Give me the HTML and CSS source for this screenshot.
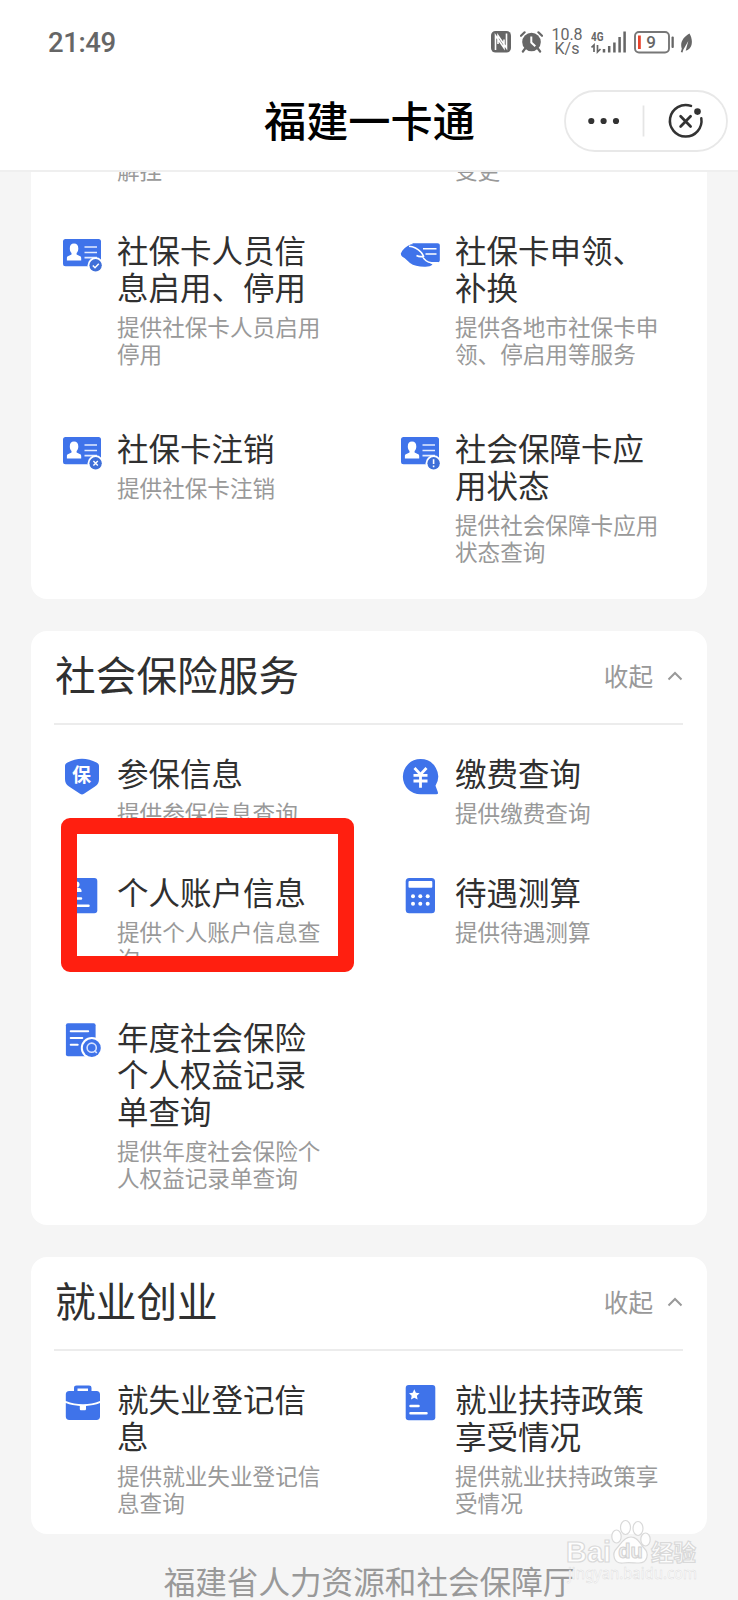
FILE: index.html
```html
<!DOCTYPE html>
<html lang="zh-CN">
<head>
<meta charset="utf-8">
<title>福建一卡通</title>
<link rel="stylesheet" href="styles.css">
</head>
<body>
<svg class="defs" width="0" height="0">
  <symbol id="id-card" viewBox="0 0 40 44">
    <rect x="1" y="7" width="38" height="27.3" rx="2.5" fill="#3f73ea"/>
    <path d="M12 11.600c2.800 0 4.300 2 4.300 4.800 0 2.200-.8 3.700-1.700 4.700v1.500l3.600 1.700c.8.400 1 1 1 1.900v2.400H4.900v-2.400c0-.9.200-1.500 1-1.900l3.600-1.700v-1.500c-.9-1-1.700-2.500-1.700-4.700 0-2.800 1.400-4.800 4.200-4.800z" fill="#fff"/>
    <path d="M22.500 15H35M22.500 20.500H35M22.500 25.700H35" stroke="#e4ecff" stroke-width="1.700"/>
    <circle cx="33.600" cy="33.300" r="8" fill="#fff"/>
    <circle cx="33.600" cy="33.300" r="6.200" fill="#3f6fd8"/>
  </symbol>
  <symbol id="chevron" viewBox="0 0 16 12">
    <path d="M1.500 9.500 8 3l6.500 6.500" fill="none" stroke="#999" stroke-width="2"/>
  </symbol>
</svg>

<header class="top">
  <div class="status">
    <span class="time">21:49</span>
    <div class="indicators">
      <svg class="nfc" width="20" height="22" viewBox="0 0 20 22">
        <rect width="20" height="21.500" rx="4.500" fill="#666"/>
        <path d="M4.500 19V4.500l8.500 12.500V8.500M15.500 2.500V17L7 4.500V13" fill="none" stroke="#fff" stroke-width="1.600"/>
      </svg>
      <svg class="alarm" width="23" height="22" viewBox="0 0 23 22">
        <circle cx="11.500" cy="11" r="9.300" fill="#666"/>
        <path d="M1 4.800 4.600 1.300M22 4.800l-3.600-3.500M5.500 17l-2.600 3.500M17.500 17l2.600 3.500" stroke="#666" stroke-width="2.200" stroke-linecap="round"/>
        <path d="M11.300 5.500v6l4 3.700" fill="none" stroke="#fff" stroke-width="2"/>
      </svg>
      <span class="speed"><span>10.8</span><span>K/s</span></span>
      <svg class="signal" width="36" height="24" viewBox="0 0 36 24">
        <text x="0" y="10" class="net" textLength="12.500" lengthAdjust="spacingAndGlyphs">4G</text>
        <path d="M.5 16.500 3 14v7M6.500 14v7L9.500 18" fill="none" stroke="#666" stroke-width="1.700"/>
        <path d="M13 18v3.500M18.200 15v6.500M23.400 11.500v10M28.600 6v15.500M33.600 .500v21" stroke="#666" stroke-width="2.500"/>
      </svg>
      <svg class="battery" width="41" height="23" viewBox="0 0 41 23">
        <rect x="1" y="1" width="34" height="20.500" rx="4" fill="none" stroke="#777" stroke-width="1.900"/>
        <rect x="4" y="4.500" width="2.800" height="13.500" fill="#e8432c"/>
        <rect x="37.500" y="5.500" width="2.300" height="11.500" rx="1" fill="#666"/>
        <text x="17" y="17.300" class="level" text-anchor="middle">9</text>
      </svg>
      <svg class="leaf" width="13" height="20" viewBox="0 0 13 20">
        <path d="M9.500.500C11.500 4 12.500 8 11.500 12c-.8 3-3 5-5.800 5.800L8.300 8 3.300 16.800 2.500 19.500.8 19l1-3.200C-.5 9 4 3.500 9.500.500z" fill="#666"/>
      </svg>
    </div>
  </div>
  <div class="nav">
    <h1>福建一卡通</h1>
    <div class="capsule">
      <svg width="164" height="62" viewBox="0 0 164 62">
        <rect x="1" y="1" width="162" height="60" rx="30" fill="#fff" stroke="#e8e8e8" stroke-width="1.800"/>
        <g fill="#333"><circle cx="27.300" cy="31" r="3.100"/><circle cx="39.600" cy="31" r="3.100"/><circle cx="52" cy="31" r="3.100"/></g>
        <path d="M79.500 15.500v31" stroke="#e5e5e5" stroke-width="1.800"/>
        <path d="M127 15.900A15.800 15.800 0 1 0 137.300 28.300" fill="none" stroke="#333" stroke-width="2.500" stroke-linecap="round"/>
        <circle cx="133.500" cy="21.600" r="3.300" fill="#333"/>
        <path d="m116.600 26.200 10 10.300m0-10.300-10 10.300" stroke="#333" stroke-width="2.700" stroke-linecap="round"/>
      </svg>
    </div>
  </div>
</header>

<main>
  <section class="card first">
    <div class="grid">
      <div class="item tail"><div class="icon"></div><p>解挂</p></div>
      <div class="item tail"><div class="icon"></div><p>变更</p></div>
      <div class="item tall">
        <svg class="icon" viewBox="0 0 40 44"><use href="#id-card"/><path d="m30.800 33.500 2.200 2.200 3.800-4" fill="none" stroke="#fff" stroke-width="1.500"/></svg>
        <div class="text"><h3>社保卡人员信<br>息启用、停用</h3><p>提供社保卡人员启用<br>停用</p></div>
      </div>
      <div class="item tall">
        <svg class="icon" viewBox="0 0 40 44">
          <path d="M12.500 11.300H37.500c1.500 0 2.300.8 2.300 2.300V28c0 1.500-.8 2.300-2.300 2.300H12z" fill="#3f73ea"/>
          <path d="M.8 21.500C2.500 17 6.500 14 10.500 12.500c3-1 6.500 1.500 9 4l5 7.500c1.500 4 4.500 7 8 8.500-1.500 1.700-4 2.200-7 2.200-6 .2-12-1-15.500-3.700L4.500 26C2.500 25 1 24 .8 21.500z" fill="#3f73ea"/>
          <path d="M9 14.200c5 .3 9 2.800 12.300 6.300 1.500 2 2 3 2.200 3.800-2.500.7-5 .3-7-.8M22.500 24.500c1.500 3 4.500 5.600 9 6.300h7" fill="none" stroke="#fff" stroke-width="1.600"/>
          <path d="M23 16.800h13.500M25.500 22h11" stroke="#fff" stroke-width="1.600"/>
        </svg>
        <div class="text"><h3>社保卡申领、<br>补换</h3><p>提供各地市社保卡申<br>领、停启用等服务</p></div>
      </div>
      <div class="item">
        <svg class="icon" viewBox="0 0 40 44"><use href="#id-card"/><path d="m31.400 31.100 4.400 4.400m0-4.400-4.400 4.400" stroke="#fff" stroke-width="1.400"/></svg>
        <div class="text"><h3>社保卡注销</h3><p>提供社保卡注销</p></div>
      </div>
      <div class="item">
        <svg class="icon" viewBox="0 0 40 44"><use href="#id-card"/><path d="M33.600 29.300v4.800m0 1.400v1.700" stroke="#fff" stroke-width="1.600"/></svg>
        <div class="text"><h3>社会保障卡应<br>用状态</h3><p>提供社会保障卡应用<br>状态查询</p></div>
      </div>
    </div>
  </section>

  <section class="card">
    <div class="head"><h2>社会保险服务</h2><span class="fold">收起<svg width="16" height="12"><use href="#chevron"/></svg></span></div>
    <div class="grid">
      <div class="item">
        <svg class="icon" viewBox="0 0 40 44">
          <path d="M20 3.700c5 0 10 1.500 14.500 3.800 1.800 1 2.500 1.800 2.500 3.500v13c0 3.500-1 5.500-4 7.500l-11 7.300c-1.500 1-2.500 1-4 0L7 31.500C4 29.500 3 27.500 3 24V11c0-1.700.7-2.500 2.500-3.500C10 5.200 15 3.700 20 3.700z" fill="#3f73ea"/>
          <text x="19.500" y="26.500" class="shield" text-anchor="middle">保</text>
        </svg>
        <div class="text"><h3>参保信息</h3><p>提供参保信息查询</p></div>
      </div>
      <div class="item">
        <svg class="icon" viewBox="0 0 40 44">
          <path d="M20.500 4A17.500 17.500 0 0 1 35.500 30.700L37.800 37c.4 1.500.2 2.300-1.300 2.300h-16A17.600 17.600 0 0 1 20.500 4z" fill="#3f73ea"/>
          <path d="m14.500 13 6 6.500 6-6.500M20.500 19.500v13.200M13.500 20.300h14M13.500 26h14" fill="none" stroke="#fff" stroke-width="2.800"/>
        </svg>
        <div class="text"><h3>缴费查询</h3><p>提供缴费查询</p></div>
      </div>
      <div class="item">
        <svg class="icon" viewBox="0 0 40 44">
          <rect x="5.700" y="4" width="29.600" height="35.200" rx="3" fill="#3f73ea"/>
          <circle cx="14.500" cy="10.500" r="3" fill="#fff"/><path d="M9.500 18v-1.500c0-4 10-4 10 0V18z" fill="#fff"/>
          <path d="M10 24.500h9M10 31.700h16.500" stroke="#fff" stroke-width="2.500" stroke-linecap="round"/>
        </svg>
        <div class="text"><h3>个人账户信息</h3><p>提供个人账户信息查<br>询</p></div>
      </div>
      <div class="item">
        <svg class="icon" viewBox="0 0 40 44">
          <rect x="5.700" y="4" width="29.300" height="35.300" rx="3.500" fill="#3f73ea"/>
          <rect x="8.500" y="7" width="23.800" height="6.800" rx="1" fill="#fff"/>
          <g fill="#fff"><circle cx="13" cy="22.300" r="2"/><circle cx="20.300" cy="22.300" r="2"/><circle cx="27.700" cy="22.300" r="2"/><circle cx="13" cy="29.800" r="2"/><circle cx="20.300" cy="29.800" r="2"/><circle cx="27.700" cy="29.800" r="2"/></g>
        </svg>
        <div class="text"><h3>待遇测算</h3><p>提供待遇测算</p></div>
      </div>
      <div class="item">
        <svg class="icon" viewBox="0 0 40 44">
          <rect x="3.900" y="4.300" width="29.700" height="33" rx="2" fill="#3f73ea"/>
          <path d="M8.700 12.300h17.500M8.700 18.900h11.600M8.700 25.700h7" stroke="#fff" stroke-width="2" stroke-linecap="round"/>
          <circle cx="29.800" cy="29" r="11" fill="#fff"/><circle cx="29.800" cy="29" r="9" fill="#3f73ea"/>
          <circle cx="29.700" cy="28.700" r="4.600" fill="none" stroke="#d5e1ff" stroke-width="1.600"/>
          <path d="m32.500 31.700 2.300 2.300" stroke="#d5e1ff" stroke-width="1.700"/>
        </svg>
        <div class="text"><h3>年度社会保险<br>个人权益记录<br>单查询</h3><p>提供年度社会保险个<br>人权益记录单查询</p></div>
      </div>
    </div>
    <div class="highlight"></div>
  </section>

  <section class="card last">
    <div class="head"><h2>就业创业</h2><span class="fold">收起<svg width="16" height="12"><use href="#chevron"/></svg></span></div>
    <div class="grid">
      <div class="item">
        <svg class="icon" viewBox="0 0 40 44">
          <path d="M12 10V7c0-1.700.8-2.500 2.500-2.500h12.500c1.700 0 2.500.8 2.500 2.500v3h5c2.300 0 3.500 1.200 3.500 3.500V20c-5.500 2.200-11 3.300-17 3.300S9.500 22.200 3.800 20v-6.500C3.800 11.200 5 10 7.300 10zM15.500 10h10.500V7.500H15.500z" fill="#3f73ea" fill-rule="evenodd"/>
          <path d="M3.800 22c4.500 1.700 9 2.600 14 2.900v2.800c0 1 .5 1.500 1.500 1.500h3.200c1 0 1.500-.5 1.500-1.500v-2.800c5-.3 9.500-1.200 14-2.900v13.500c0 2.300-1.200 3.500-3.500 3.500H7.300c-2.300 0-3.500-1.200-3.500-3.500z" fill="#3f73ea"/>
        </svg>
        <div class="text"><h3>就失业登记信<br>息</h3><p>提供就业失业登记信<br>息查询</p></div>
      </div>
      <div class="item">
        <svg class="icon" viewBox="0 0 40 44">
          <rect x="5.700" y="4" width="29.600" height="35.300" rx="3" fill="#3f73ea"/>
          <path d="m14.300 8.300 1.600 3.400 3.700.5-2.700 2.600.7 3.700-3.300-1.800L11 18.500l.7-3.700L9 12.200l3.700-.5z" fill="#fff"/>
          <path d="M10.500 25h8M10.500 32.300h16" stroke="#fff" stroke-width="2.500" stroke-linecap="round"/>
        </svg>
        <div class="text"><h3>就业扶持政策<br>享受情况</h3><p>提供就业扶持政策享<br>受情况</p></div>
      </div>
    </div>
  </section>
  <footer>福建省人力资源和社会保障厅</footer>
</main>

<svg class="watermark" width="140" height="70" viewBox="0 0 140 70">
  <g class="mark">
    <text x="3" y="43" class="brand" textLength="45" lengthAdjust="spacingAndGlyphs">Bai</text>
    <ellipse cx="53.500" cy="17.500" rx="4.700" ry="6.500"/><ellipse cx="62.500" cy="8.500" rx="5" ry="7"/><ellipse cx="75" cy="9.500" rx="5" ry="7"/><ellipse cx="82.500" cy="20.500" rx="4.700" ry="6.500"/>
    <path d="M68 18c7 0 9 7 13 11 6 6 3 15-5 15-5 0-11-1-16 0-9 1-12-9-6-15 4-4 7-11 14-11z"/>
    <text x="88" y="41.500" class="cn" textLength="45" lengthAdjust="spacingAndGlyphs">经验</text>
  </g>
  <text x="67.500" y="39" text-anchor="middle" class="du">du</text>
  <text x="5" y="59.500" class="url" textLength="129" lengthAdjust="spacingAndGlyphs">jingyan.baidu.com</text>
</svg>
</body>
</html>
```
FILE: styles.css
```css
* { box-sizing: border-box; }
body {
  position: relative;
  margin: 0;
  width: 738px;
  height: 1600px;
  overflow: hidden;
  background: #f5f5f5;
  color: #303030;
  font-family: "Noto Sans CJK SC", sans-serif;
}
h1, h2, h3, p { margin: 0; font-weight: 400; }
.defs { display: none; }

/* status bar and title bar */
.top { height: 172px; background: #fff; border-bottom: 2px solid #efefef; }
.status {
  display: flex;
  justify-content: space-between;
  height: 84px;
  padding: 0 45px 0 48px;
}
.time {
  padding-top: 26px;
  font: 500 27.500px/33px Roboto, sans-serif;
  letter-spacing: -.4px;
  color: #666;
}
.indicators { display: flex; align-items: flex-start; padding-top: 31px; }
.alarm { margin-left: 9px; }
.speed {
  display: flex;
  flex-direction: column;
  width: 32px;
  margin: -3px 0 0 8px;
  font: 400 16px/14px Roboto, sans-serif;
  text-align: center;
  color: #666;
}
.signal { margin-left: 8px; }
.battery { margin-left: 7px; }
.leaf { margin: 2px 0 0 5px; }
.net { font: 700 13px Roboto, sans-serif; fill: #666; }
.level { font: 500 17px Roboto, sans-serif; fill: #666; }
.nav {
  display: grid;
  grid-template-columns: 1fr 210px 1fr;
  align-items: center;
  height: 74px;
}
.nav h1 {
  grid-column: 2;
  margin-top: -5px;
  font-size: 42.200px;
  line-height: 60px;
  font-weight: 500;
  white-space: nowrap;
  color: #000;
}
.capsule { justify-self: end; margin-right: 10px; height: 62px; }

/* service cards */
main { height: 1428px; overflow: hidden; }
.card {
  position: relative;
  width: 676px;
  height: 594px;
  margin: 0 0 32px 31px;
  overflow: hidden;
  background: #fff;
  border-radius: 16px;
}
.card.first { height: 427px; border-radius: 0 0 16px 16px; }
.card.last { height: 277px; }
.head {
  display: flex;
  align-items: center;
  justify-content: space-between;
  height: 94px;
  margin: 0 24px 0 23px;
  padding-bottom: 7px;
  border-bottom: 2px solid #ececec;
}
.head h2 { padding-left: 1px; font-size: 40.700px; line-height: 54px; }
.fold { display: flex; align-items: center; gap: 14px; padding-top: 2px; font-size: 24.600px; line-height: 32px; color: #999; }
.fold svg { margin-top: 3px; }
.grid {
  display: grid;
  grid-template-columns: 338px 306px;
  row-gap: 46.500px;
  padding: 30px 0 0 31px;
}
.first .grid { padding-top: 0; margin-top: -16px; }
.item { display: flex; gap: 15px; }
.tall { min-height: 152px; }
.icon { flex: none; width: 40px; height: 44px; }
.tail { height: 29px; }
.tail .icon { height: 0; }
.text { margin: -1px 0 1px; }
.item h3 { margin-bottom: 8px; font-size: 31.500px; line-height: 37px; white-space: nowrap; }
.item p { font-size: 22.600px; line-height: 27px; white-space: nowrap; color: #999; }
.shield { font: 700 19px "Noto Sans CJK SC", sans-serif; fill: #fff; }

/* marker drawn over the account entry */
.highlight {
  position: absolute;
  left: 30px;
  top: 187px;
  width: 293px;
  height: 154px;
  border: 16px solid #ff1f10;
  border-radius: 9px;
}

footer {
  margin-top: -8px;
  font-size: 31.600px;
  line-height: 44px;
  text-align: center;
  color: #999;
}

/* corner watermark */
.watermark { position: absolute; left: 563px; top: 1519px; }
.mark { fill: rgba(255,255,255,.85); stroke: #d9d9d9; stroke-width: 1.200px; }
.brand { font: 700 30px "Liberation Sans", sans-serif; }
.cn { font: 700 23px "Noto Sans CJK SC", sans-serif; }
.du { font: 700 20px "Liberation Sans", sans-serif; fill: #f3f3f3; stroke: #d2d2d2; stroke-width: 1px; }
.url { font: 400 17px "Noto Sans", sans-serif; fill: #fff; stroke: #dcdcdc; stroke-width: .5px; }
```
